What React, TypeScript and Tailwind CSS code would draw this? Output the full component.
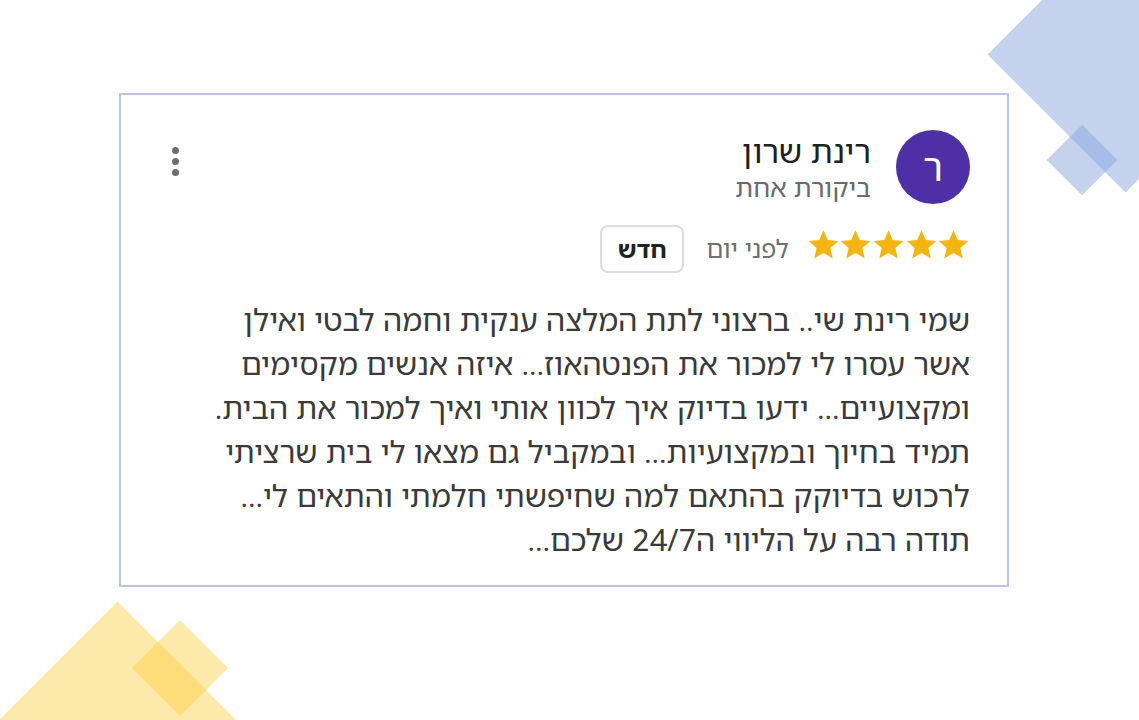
import React from "react";

const lines = [
  "שמי רינת שי.. ברצוני לתת המלצה ענקית וחמה לבטי ואילן",
  "אשר עסרו לי למכור את הפנטהאוז... איזה אנשים מקסימים",
  "ומקצועיים... ידעו בדיוק איך לכוון אותי ואיך למכור את הבית.",
  "תמיד בחיוך ובמקצועיות... ובמקביל גם מצאו לי בית שרציתי",
  "לרכוש בדיוקק בהתאם למה שחיפשתי חלמתי והתאים לי...",
  "תודה רבה על הליווי ה24/7 שלכם...",
];

function Star() {
  return (
    <svg viewBox="0 0 24 24" className="w-[33px] h-[33px] -mx-[0.2px]" fill="#f5b511">
      <path d="M12 1.6l3.1 7.1 7.7.7-5.8 5.1 1.7 7.6L12 18.1l-6.7 4 1.7-7.6-5.8-5.1 7.7-.7z" />
    </svg>
  );
}

export default function App() {
  return (
    <div
      className="relative w-[1139px] h-[720px] overflow-hidden bg-white"
      style={{ fontFamily: '"Noto Sans Hebrew", "DejaVu Sans", sans-serif' }}
    >
      {/* decorations */}
      <div className="absolute left-[1028px] top-[-43px] w-[195px] h-[195px] rotate-45 bg-[rgba(138,166,221,0.5)]" />
      <div className="absolute left-[1057px] top-[135px] w-[50px] h-[50px] rotate-45 bg-[rgba(138,166,221,0.5)]" />
      <div className="absolute left-[34px] top-[636px] w-[167px] h-[167px] rotate-45 bg-[rgba(251,207,64,0.45)]" />
      <div className="absolute left-[146px] top-[634px] w-[68px] h-[68px] rotate-45 bg-[rgba(251,207,64,0.45)]" />

      <div className="pt-[93px] pl-[119px]">
        <div
          dir="rtl"
          className="relative w-[890px] h-[494px] border-2 border-[#bac7de] bg-white pr-[37px] pl-[52px] pt-[35px]"
        >
          {/* header */}
          <div className="flex items-start justify-between">
            <div className="flex items-start gap-[25px]">
              <div className="w-[74px] h-[74px] rounded-full bg-[#4f2fa6] flex items-center justify-center text-white text-[38px] leading-none pb-[2px]">
                ר
              </div>
              <div className="flex flex-col pt-[2px]">
                <div className="text-[32px] leading-[38px] text-[#202020]">רינת שרון</div>
                <div className="text-[26px] leading-[34px] text-[#6b6b6b]">ביקורת אחת</div>
              </div>
            </div>
            <div className="flex flex-col gap-[4px] pt-[17px] ml-[-1px]">
              <span className="block w-[7px] h-[7px] rounded-full bg-[#6e6e6e]" />
              <span className="block w-[7px] h-[7px] rounded-full bg-[#6e6e6e]" />
              <span className="block w-[7px] h-[7px] rounded-full bg-[#6e6e6e]" />
            </div>
          </div>

          {/* rating row */}
          <div className="flex items-center mt-[21px]">
            <div className="flex -mt-[10px]">
              <Star />
              <Star />
              <Star />
              <Star />
              <Star />
            </div>
            <span className="mr-[18px] text-[25px] text-[#707070]">לפני יום</span>
            <span className="mr-[22px] w-[84px] h-[48px] flex items-center justify-center rounded-[8px] border-2 border-[#dcdcdc] text-[24px] font-bold text-[#222]">
              חדש
            </span>
          </div>

          {/* body */}
          <div className="mt-[24px] text-[30.5px] leading-[44px] text-[#3a3a3a]">
            {lines.map((l) => (
              <div key={l} className="whitespace-nowrap">
                {l}
              </div>
            ))}
          </div>
        </div>
      </div>
    </div>
  );
}
